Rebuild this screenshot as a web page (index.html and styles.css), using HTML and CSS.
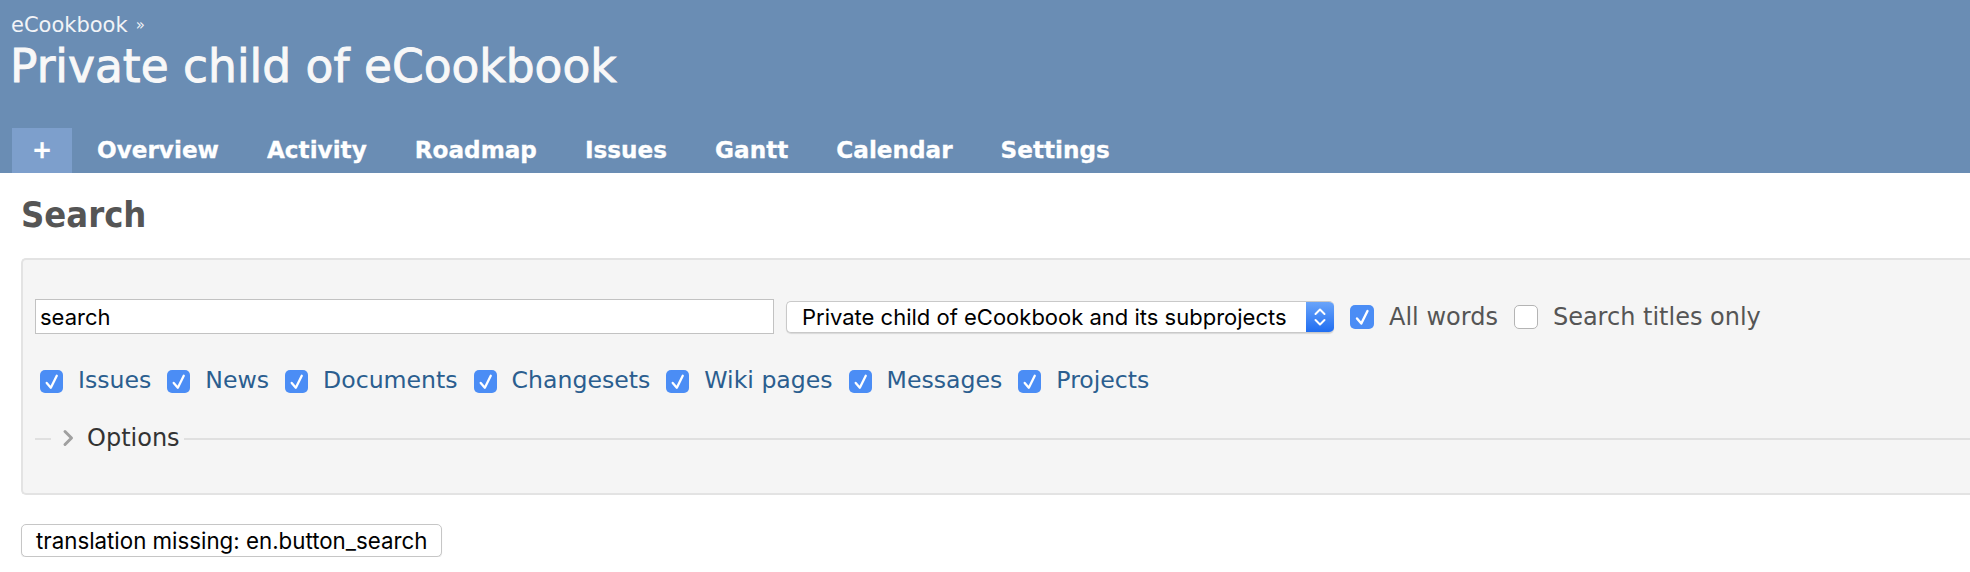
FILE: index.html
```html
<!DOCTYPE html>
<html lang="en">
<head>
<meta charset="utf-8">
<title>Search - Private child of eCookbook</title>
<link rel="stylesheet" href="styles.css">
</head>
<body>
<div id="header">
  <div class="breadcrumb"><a href="#">eCookbook</a><span class="sep">»</span></div>
  <h1>Private child of eCookbook</h1>
  <nav class="main-menu">
    <a class="tab tab-new" href="#">+</a>
    <a class="tab" href="#">Overview</a>
    <a class="tab" href="#">Activity</a>
    <a class="tab" href="#">Roadmap</a>
    <a class="tab" href="#">Issues</a>
    <a class="tab" href="#">Gantt</a>
    <a class="tab" href="#">Calendar</a>
    <a class="tab" href="#">Settings</a>
  </nav>
</div>
<div id="content">
  <h2>Search</h2>
  <form class="search-form">
    <div class="box">
      <div class="query-row">
        <input class="q" type="text" value="search">
        <div class="scope">
          <span class="scope-text">Private child of eCookbook and its subprojects</span>
          <span class="stepper"><svg viewBox="0 0 28 32" width="28" height="32"><path d="M9.5 13 L14 8.5 L18.5 13 M9.5 19 L14 23.5 L18.5 19" stroke="#fff" stroke-width="2" fill="none" stroke-linecap="round" stroke-linejoin="round"/></svg></span>
        </div>
        <label class="opt"><span class="cb on"><svg viewBox="0 0 24 24"><path d="M7 13.5 L11.3 18.5 L17.5 6" stroke="#fff" stroke-width="2.4" fill="none" stroke-linecap="round" stroke-linejoin="round"/></svg></span><span>All words</span></label>
        <label class="opt"><span class="cb off"></span><span>Search titles only</span></label>
      </div>
      <div class="types-row">
        <label class="type"><span class="cb on"><svg viewBox="0 0 24 24"><path d="M7 13.5 L11.3 18.5 L17.5 6" stroke="#fff" stroke-width="2.4" fill="none" stroke-linecap="round" stroke-linejoin="round"/></svg></span><a href="#">Issues</a></label>
        <label class="type"><span class="cb on"><svg viewBox="0 0 24 24"><path d="M7 13.5 L11.3 18.5 L17.5 6" stroke="#fff" stroke-width="2.4" fill="none" stroke-linecap="round" stroke-linejoin="round"/></svg></span><a href="#">News</a></label>
        <label class="type"><span class="cb on"><svg viewBox="0 0 24 24"><path d="M7 13.5 L11.3 18.5 L17.5 6" stroke="#fff" stroke-width="2.4" fill="none" stroke-linecap="round" stroke-linejoin="round"/></svg></span><a href="#">Documents</a></label>
        <label class="type"><span class="cb on"><svg viewBox="0 0 24 24"><path d="M7 13.5 L11.3 18.5 L17.5 6" stroke="#fff" stroke-width="2.4" fill="none" stroke-linecap="round" stroke-linejoin="round"/></svg></span><a href="#">Changesets</a></label>
        <label class="type"><span class="cb on"><svg viewBox="0 0 24 24"><path d="M7 13.5 L11.3 18.5 L17.5 6" stroke="#fff" stroke-width="2.4" fill="none" stroke-linecap="round" stroke-linejoin="round"/></svg></span><a href="#">Wiki pages</a></label>
        <label class="type"><span class="cb on"><svg viewBox="0 0 24 24"><path d="M7 13.5 L11.3 18.5 L17.5 6" stroke="#fff" stroke-width="2.4" fill="none" stroke-linecap="round" stroke-linejoin="round"/></svg></span><a href="#">Messages</a></label>
        <label class="type"><span class="cb on"><svg viewBox="0 0 24 24"><path d="M7 13.5 L11.3 18.5 L17.5 6" stroke="#fff" stroke-width="2.4" fill="none" stroke-linecap="round" stroke-linejoin="round"/></svg></span><a href="#">Projects</a></label>
      </div>
      <fieldset class="options">
        <legend><span class="legend-inner"><svg class="arrow" viewBox="0 0 12 18" width="12" height="18"><path d="M3 2.5 L9.5 9 L3 15.5" stroke="#a0a0a0" stroke-width="3" fill="none" stroke-linecap="round" stroke-linejoin="round"/></svg>Options</span></legend>
      </fieldset>
    </div>
    <button class="submit" type="button">translation missing: en.button_search</button>
  </form>
</div>
</body>
</html>
```

FILE: styles.css
```css
body {
  margin: 0;
  background: #fff;
  font-family: "DejaVu Sans", Verdana, sans-serif;
}

#header {
  background: #6a8db4;
  color: #fff;
  height: 173px;
  overflow: hidden;
}

.breadcrumb {
  padding: 11px 0 0 11px;
  height: 28px;
  font-size: 21px;
  line-height: 28px;
  color: #f2f4f7;
}

.breadcrumb a {
  color: inherit;
  text-decoration: none;
}

.breadcrumb .sep {
  font-size: 15px;
  margin-left: 8px;
  vertical-align: 2px;
}

#header h1 {
  margin: 0;
  padding-left: 10px;
  font-size: 45.5px;
  line-height: 56px;
  font-weight: normal;
  color: #f8f8f8;
  -webkit-text-stroke: 0.9px #f8f8f8;
}

.main-menu {
  display: flex;
  margin-top: 33px;
  padding-left: 12px;
  height: 45px;
}

.tab {
  display: block;
  padding: 0 24px;
  font-weight: bold;
  font-size: 23.15px;
  line-height: 45px;
  color: #fff;
  text-decoration: none;
  white-space: nowrap;
  -webkit-text-stroke: 0.3px #fff;
}

.tab-new {
  width: 60px;
  padding: 0;
  margin-right: 1px;
  text-align: center;
  background: #7d9fcc;
  font-size: 24px;
}

#content {
  padding: 0 0 0 21px;
}

#content h2 {
  margin: 21px 0 22px;
  font-family: "DejaVu Sans Condensed", "DejaVu Sans", sans-serif;
  font-weight: bold;
  font-size: 36px;
  line-height: 42px;
  color: #555;
}

.search-form {
  margin: 0;
}

.box {
  background: #f5f5f5;
  border: 2px solid #e3e3e3;
  border-right: 0;
  border-radius: 5px 0 0 5px;
  padding: 39px 0 40px 12px;
}

.query-row {
  display: flex;
  align-items: center;
  height: 35px;
}

.q {
  flex: none;
  width: 739px;
  height: 35px;
  box-sizing: border-box;
  margin: 0;
  padding: 0 4px;
  border: 1px solid #c2c2c2;
  border-radius: 0;
  background: #fff;
  color: #000;
  font-family: Inter, "Liberation Sans", sans-serif;
  font-size: 22px;
  outline: none;
}

.scope {
  flex: none;
  margin-left: 12px;
  width: 548px;
  height: 32px;
  box-sizing: border-box;
  display: flex;
  align-items: center;
  background: #fff;
  border: 1px solid #c9c9c9;
  border-right: 0;
  border-radius: 5px;
  box-shadow: 0 1px 1px rgba(0, 0, 0, 0.12);
  overflow: hidden;
  font-family: Inter, "Liberation Sans", sans-serif;
  font-size: 22px;
  color: #000;
}

.scope-text {
  flex: 1;
  padding-left: 15px;
  white-space: nowrap;
  overflow: hidden;
}

.stepper {
  flex: none;
  width: 28px;
  height: 32px;
  margin-top: -1px;
  margin-bottom: -1px;
  background: linear-gradient(#6ca6fa, #1e6cf1);
  display: flex;
}

.opt {
  display: flex;
  align-items: center;
  margin-left: 16px;
  font-size: 24px;
  line-height: 24px;
  color: #555;
  white-space: nowrap;
}

.cb {
  flex: none;
  display: block;
  width: 24px;
  height: 24px;
  box-sizing: border-box;
  border-radius: 5px;
  margin-right: 15px;
}

.cb svg {
  display: block;
  width: 100%;
  height: 100%;
}

.cb.on {
  background: #4b8df5;
}

.cb.off {
  background: #fff;
  border: 1px solid #b4b4b4;
}

.types-row {
  display: flex;
  align-items: flex-start;
  margin-top: 34px;
  padding-left: 5px;
  height: 25px;
}

.type {
  display: flex;
  align-items: flex-start;
  margin-right: 16px;
  font-size: 23.6px;
  line-height: 24px;
  white-space: nowrap;
}

.type .cb {
  width: 23px;
  height: 23px;
  margin-top: 2px;
}

.type a {
  color: #2b5e8f;
  text-decoration: none;
}

.options {
  margin: 31px 0 0;
  min-width: 0;
  border: 0;
  border-top: 2px solid #e0e0e0;
  padding: 0 0 0 16px;
}

.options legend {
  padding: 0 4px 0 0;
  font-size: 24px;
  line-height: 28px;
  color: #333;
}

.legend-inner {
  display: inline-flex;
  align-items: center;
}

.arrow {
  display: block;
  margin: 0 13px 0 11px;
}

.submit {
  display: block;
  margin: 29px 0 0;
  height: 33px;
  padding: 0 14px;
  background: #fff;
  border: 1px solid #c6c6c6;
  border-radius: 5px;
  box-shadow: 0 1px 1px rgba(0, 0, 0, 0.1);
  font-family: Inter, "Liberation Sans", sans-serif;
  font-size: 22.3px;
  color: #000;
}
```
